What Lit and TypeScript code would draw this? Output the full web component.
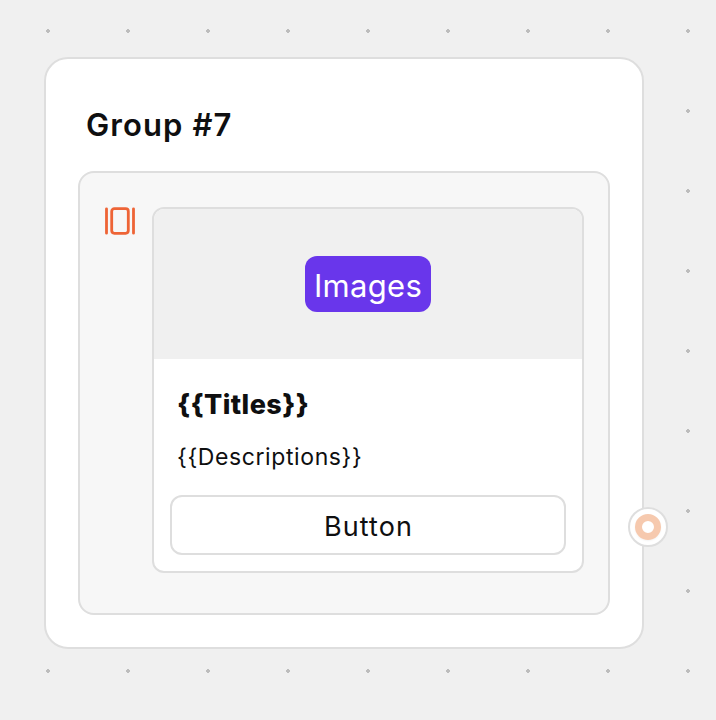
import { LitElement, html, css } from "lit";
import { customElement, property } from "lit/decorators.js";

@customElement("carousel-card")
class CarouselCard extends LitElement {
  @property() image = "";
  @property() heading = "";
  @property() description = "";
  @property() action = "";

  static styles = css`
    :host {
      display: flex;
      flex-direction: column;
      box-sizing: border-box;
      width: 432px;
      height: 366px;
      border: 2px solid #dedede;
      border-radius: 12px;
      background: #fff;
      overflow: hidden;
    }
    .media {
      display: flex;
      align-items: center;
      justify-content: center;
      height: 150px;
      background: #f0f0f0;
    }
    .tag {
      display: flex;
      align-items: center;
      justify-content: center;
      box-sizing: border-box;
      width: 126px;
      height: 56px;
      padding-top: 4px;
      border-radius: 12px;
      background: #6936eb;
      color: #fff;
      font-size: 31px;
      line-height: 52px;
      font-weight: 400;
      letter-spacing: 0.3px;
      white-space: nowrap;
    }
    .text {
      height: 136px;
      padding: 0 23px;
      box-sizing: border-box;
      white-space: nowrap;
    }
    .heading {
      padding-top: 26px;
      font-size: 27px;
      line-height: 40px;
      font-weight: 800;
      letter-spacing: 0.4px;
    }
    .description {
      padding-top: 14px;
      font-size: 23px;
      line-height: 36px;
      letter-spacing: 0.6px;
    }
    .action {
      display: block;
      box-sizing: border-box;
      width: 396px;
      height: 60px;
      margin: 0 16px;
      padding: 3px 0 0 1px;
      border: 2px solid #dedede;
      border-radius: 12px;
      background: #fff;
      color: inherit;
      font: 400 27px/53px Inter, sans-serif;
      letter-spacing: 1.1px;
      text-align: center;
    }
  `;

  render() {
    return html`
      <div class="media"><span class="tag">${this.image}</span></div>
      <div class="text">
        <div class="heading">${this.heading}</div>
        <div class="description">${this.description}</div>
      </div>
      <button class="action">${this.action}</button>
    `;
  }
}

@customElement("app-root")
class AppRoot extends LitElement {
  static styles = css`
    :host {
      display: block;
      box-sizing: border-box;
      width: 716px;
      height: 720px;
      padding: 57px 0 0 44px;
      overflow: hidden;
      background: #f0f0f0 radial-gradient(circle at 40px 40px, #bdbdbd 1.7px, transparent 1.9px) 8px -9px / 80px 80px;
      color: #0f0f10;
      font-family: Inter, sans-serif;
    }
    .group {
      position: relative;
      box-sizing: border-box;
      width: 600px;
      height: 592px;
      padding: 46px 32px 32px;
      border: 2px solid #dedede;
      border-radius: 24px;
      background: #fff;
    }
    .title {
      height: 66px;
      padding-left: 8px;
      font-size: 31px;
      line-height: 40px;
      font-weight: 600;
      letter-spacing: 1.1px;
      white-space: nowrap;
    }
    .block {
      display: flex;
      gap: 16px;
      box-sizing: border-box;
      width: 532px;
      height: 444px;
      padding: 34px 24px;
      border: 2px solid #dedede;
      border-radius: 16px;
      background: #f7f7f7;
    }
    .icon {
      display: block;
      flex: none;
      width: 32px;
      height: 28px;
    }
    .port {
      position: absolute;
      right: -26px;
      top: 448px;
      display: flex;
      align-items: center;
      justify-content: center;
      box-sizing: border-box;
      width: 40px;
      height: 40px;
      border: 2px solid #dedede;
      border-radius: 50%;
      background: #fff;
    }
    .ring {
      box-sizing: border-box;
      width: 26px;
      height: 26px;
      border: 7px solid #f6c9ae;
      border-radius: 50%;
      box-shadow: 0 1px 2px #0000000d;
    }
  `;

  render() {
    return html`
      <section class="group">
        <div class="title">Group #7</div>
        <div class="block">
          <svg class="icon" viewBox="0 0 32 28" fill="none" stroke="#ee6436" stroke-width="2.8" stroke-linecap="round">
            <path d="M2.5 1.8V26.2M29.5 1.8V26.2" />
            <rect x="7.7" y="1.7" width="16.6" height="24.6" rx="2.7" />
          </svg>
          <carousel-card
            image="Images"
            heading="{{Titles}}"
            description="{{Descriptions}}"
            action="Button"
          ></carousel-card>
        </div>
        <span class="port"><span class="ring"></span></span>
      </section>
    `;
  }
}
